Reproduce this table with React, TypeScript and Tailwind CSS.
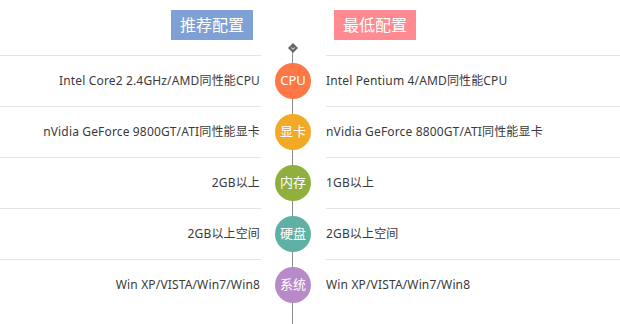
import React from "react";

const rows = [
  { l: "Intel Core2 2.4GHz/AMD同性能CPU", c: "CPU", r: "Intel Pentium 4/AMD同性能CPU", bg: "bg-[#fd7747]" },
  { l: "nVidia GeForce 9800GT/ATI同性能显卡", c: "显卡", r: "nVidia GeForce 8800GT/ATI同性能显卡", bg: "bg-[#f2aa26]" },
  { l: "2GB以上", c: "内存", r: "1GB以上", bg: "bg-[#8fb03e]" },
  { l: "2GB以上空间", c: "硬盘", r: "2GB以上空间", bg: "bg-[#5fb1a5]" },
  { l: "Win XP/VISTA/Win7/Win8", c: "系统", r: "Win XP/VISTA/Win7/Win8", bg: "bg-[#b98ac9]" },
];

export default function App() {
  return (
    <div
      className="relative w-[620px] h-[324px] bg-white text-[#3a3a3a] overflow-hidden"
      style={{ fontFamily: '"Noto Sans", "Noto Sans CJK SC", sans-serif' }}
    >
      <div className="absolute left-[292px] top-[48px] bottom-0 w-px bg-[#8a8a8a]" />
      <div className="relative flex h-[55px]">
        <div className="w-[261px] flex justify-end pr-2 pt-[10px]">
          <div className="w-[82px] h-[30px] bg-[#7fa0d4] text-white text-[16px] leading-[30px] text-center">推荐配置</div>
        </div>
        <div className="w-[65px] flex justify-center pt-[43px]">
          <svg width="10" height="10" viewBox="0 0 10 10" className="ml-[-1px]">
            <path d="M5 0 L10 5 L5 10 L0 5 Z" fill="#666" />
            <path d="M3.2 4.6 L5 6.2 L6.8 4.6" stroke="#fff" strokeWidth="0.9" fill="none" />
          </svg>
        </div>
        <div className="flex-1 pl-2 pt-[10px]">
          <div className="w-[82px] h-[30px] bg-[#ff8a91] text-white text-[16px] leading-[30px] text-center">最低配置</div>
        </div>
      </div>
      {rows.map((row, i) => (
        <div key={i} className="relative flex h-[51px]">
          <div className="w-[261px] border-t border-[#e6e6e6] flex items-center justify-end text-[12px] tracking-[0.15px] pr-px">{row.l}</div>
          <div className="w-[65px] flex items-center justify-center">
            <div className={`w-[36px] h-[36px] rounded-full ${row.bg} text-white text-[13px] flex items-center justify-center ml-[-1px]`}>
              {row.c}
            </div>
          </div>
          <div className="flex-1 border-t border-[#e6e6e6] flex items-center text-[12px] tracking-[0.15px]">{row.r}</div>
        </div>
      ))}
    </div>
  );
}
